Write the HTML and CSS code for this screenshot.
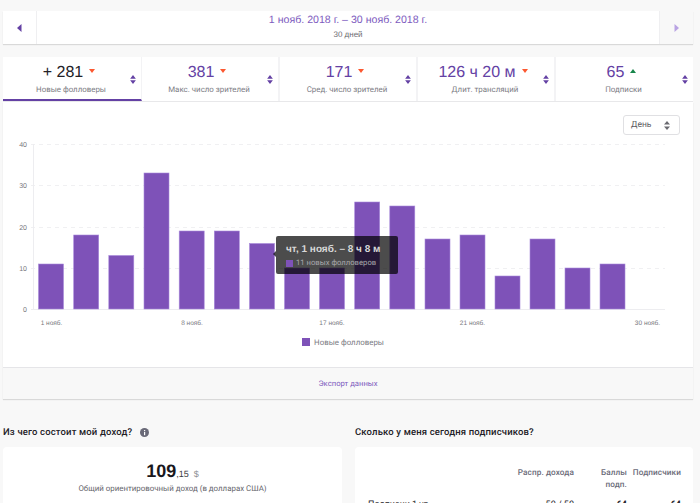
FILE: index.html
```html
<!DOCTYPE html>
<html lang="ru">
<head>
<meta charset="utf-8">
<title>Аналитика</title>
<link rel="stylesheet" href="styles.css">
</head>
<body>
<div class="page">
  <section class="datebar">
    <button class="nav"><svg width="5" height="8" viewBox="0 0 5 8"><path d="M4.500 0v8L0 4z" fill="#6441a4"/></svg></button>
    <div class="range">
      <div class="range-title">1 нояб. 2018 г. – 30 нояб. 2018 г.</div>
      <div class="range-sub">30 дней</div>
    </div>
    <button class="nav nav-next"><svg width="5" height="8" viewBox="0 0 5 8"><path d="M.5 0v8L5 4z" fill="#b9a3e3"/></svg></button>
  </section>

  <section class="tabs">
    <div class="tab tab-active">
      <div class="tab-value"><span class="num num-dark">+ 281</span><i class="tri tri-down"></i></div>
      <div class="tab-label">Новые фолловеры</div>
      <svg class="sort" width="6" height="9" viewBox="0 0 7 11"><path d="M3.500 0 7 4.500H0zM3.500 11 0 6.500h7z" fill="#6441a4"/></svg>
    </div>
    <div class="tab">
      <div class="tab-value"><span class="num">381</span><i class="tri tri-down"></i></div>
      <div class="tab-label">Макс. число зрителей</div>
      <svg class="sort" width="6" height="9" viewBox="0 0 7 11"><path d="M3.500 0 7 4.500H0zM3.500 11 0 6.500h7z" fill="#6441a4"/></svg>
    </div>
    <div class="tab">
      <div class="tab-value"><span class="num">171</span><i class="tri tri-down"></i></div>
      <div class="tab-label">Сред. число зрителей</div>
      <svg class="sort" width="6" height="9" viewBox="0 0 7 11"><path d="M3.500 0 7 4.500H0zM3.500 11 0 6.500h7z" fill="#6441a4"/></svg>
    </div>
    <div class="tab">
      <div class="tab-value"><span class="num">126 ч 20 м</span><i class="tri tri-down"></i></div>
      <div class="tab-label">Длит. трансляций</div>
      <svg class="sort" width="6" height="9" viewBox="0 0 7 11"><path d="M3.500 0 7 4.500H0zM3.500 11 0 6.500h7z" fill="#6441a4"/></svg>
    </div>
    <div class="tab">
      <div class="tab-value"><span class="num">65</span><i class="tri tri-up"></i></div>
      <div class="tab-label">Подписки</div>
      <svg class="sort" width="6" height="9" viewBox="0 0 7 11"><path d="M3.500 0 7 4.500H0zM3.500 11 0 6.500h7z" fill="#6441a4"/></svg>
    </div>
  </section>

  <section class="panel">
    <div class="chart-head">
      <div class="select"><span>День</span><svg width="6" height="9" viewBox="0 0 6 9"><path d="M3 0l3 3.500H0zM3 9 0 5.500h6z" fill="#6a6a70"/></svg></div>
    </div>
    <div class="chart">
      <svg class="plot" width="690" height="194" viewBox="0 134 690 194">
        <g class="grid">
          <line x1="28" x2="662" y1="144.500" y2="144.500"/>
          <line x1="28" x2="662" y1="185.500" y2="185.500"/>
          <line x1="28" x2="662" y1="227.500" y2="227.500"/>
          <line x1="28" x2="662" y1="268.500" y2="268.500"/>
        </g>
        <line class="axis" x1="28" x2="662" y1="309.500" y2="309.500"/>
        <line class="axis" x1="30.500" x2="30.500" y1="144" y2="309"/>
        <g class="ticks">
          <text x="24" y="147">40</text>
          <text x="24" y="188">30</text>
          <text x="24" y="230">20</text>
          <text x="24" y="271">10</text>
          <text x="24" y="312">0</text>
        </g>
        <g class="bars">
          <rect x="35.500" y="264" width="25" height="45"/>
          <rect x="70.700" y="235" width="25" height="74"/>
          <rect x="105.800" y="255.500" width="25" height="53.500"/>
          <rect x="141" y="173" width="25" height="136"/>
          <rect x="176.200" y="231" width="25" height="78"/>
          <rect x="211.300" y="231" width="25" height="78"/>
          <rect x="246.500" y="243.500" width="25" height="65.500"/>
          <rect x="281.500" y="268" width="25" height="41"/>
          <rect x="316.500" y="268" width="25" height="41"/>
          <rect x="351.700" y="202" width="25" height="107"/>
          <rect x="386.800" y="206" width="25" height="103"/>
          <rect x="422" y="239" width="25" height="70"/>
          <rect x="457" y="235" width="25" height="74"/>
          <rect x="492" y="276" width="25" height="33"/>
          <rect x="527" y="239" width="25" height="70"/>
          <rect x="562" y="268" width="25" height="41"/>
          <rect x="597" y="264" width="25" height="45"/>
        </g>
        <g class="dates">
          <text x="48.500" y="325">1 нояб.</text>
          <text x="189" y="325">8 нояб.</text>
          <text x="329" y="325">17 нояб.</text>
          <text x="469.500" y="325">21 нояб.</text>
          <text x="644.500" y="325">30 нояб.</text>
        </g>
      </svg>
      <div class="tooltip">
        <div class="tooltip-title">чт, 1 нояб. – 8 ч 8 м</div>
        <div class="tooltip-row"><i class="swatch swatch-sm"></i>11 новых фолловеров</div>
      </div>
    </div>
    <div class="legend"><i class="swatch"></i>Новые фолловеры</div>
    <div class="export">Экспорт данных</div>
  </section>

  <section class="columns">
    <div class="col">
      <h2 class="heading">Из чего состоит мой доход?<svg class="info" width="9" height="9" viewBox="0 0 9 9"><circle cx="4.500" cy="4.500" r="4.500" fill="#6a6a78"/><rect x="4" y="4" width="1.200" height="3.200" fill="#fff"/><rect x="4" y="2" width="1.200" height="1.200" fill="#fff"/></svg></h2>
      <div class="card income">
        <div class="total"><b>109</b><span class="cents">,15</span><span class="cur">$</span></div>
        <div class="total-label">Общий ориентировочный доход (в долларах США)</div>
      </div>
    </div>
    <div class="col col-right">
      <h2 class="heading">Сколько у меня сегодня подписчиков?</h2>
      <div class="card subs">
        <div class="row row-head">
          <span class="c-name"></span>
          <span class="c-split">Распр. дохода</span>
          <span class="c-points">Баллы<br>подп.</span>
          <span class="c-subs">Подписчики</span>
        </div>
        <div class="row row-body">
          <span class="c-name">Подписки 1 ур.</span>
          <span class="c-split">50 / 50</span>
          <span class="c-points"><b>64</b></span>
          <span class="c-subs"><b>64</b></span>
        </div>
      </div>
    </div>
  </section>
</div>
</body>
</html>
```

FILE: styles.css
```css
* { box-sizing: border-box; }
html, body { margin: 0; height: 503px; overflow: hidden; background: #f8f8f8; }
body { font-family: "Liberation Sans", Arial, sans-serif; color: #6a6a70; text-rendering: geometricPrecision; }
.page { width: 690px; margin-left: 3px; padding-top: 11px; }

.datebar { display: flex; height: 33px; background: #fff; box-shadow: 0 1px 1px rgba(0,0,0,.12); }
.nav { width: 34px; padding: 0; border: 0; background: #fff; display: flex; align-items: center; justify-content: center; border-right: 1px solid #efeff1; }
.nav-next { background: #f8f8f8; border-right: 0; border-left: 1px solid #efeff1; }
.range { flex: 1; text-align: center; }
.range-title { color: #7d5bbe; font-size: 10.600px; line-height: 14px; margin-top: 2px; }
.range-sub { color: #6a6a70; font-size: 8px; line-height: 10px; margin-top: 3px; }

.tabs { display: grid; grid-template-columns: 139px repeat(3, 138px) 137px; margin-top: 13px; height: 45px; background: #fff; border-bottom: 1px solid #e8e8ea; }
.tab { position: relative; text-align: center; border-right: 2px solid #f3f3f5; height: 44px; padding-top: 6px; }
.tab:last-child { border-right: 0; }
.tab-active { border-right: 1px solid #f3f3f5; border-bottom: 2px solid #6441a4; }
.tab-value { display: flex; justify-content: center; align-items: flex-start; gap: 6px; height: 20px; padding-right: 6px; }
.num { font-size: 16px; line-height: 20px; color: #6441a4; }
.num-dark { color: #232127; }
.tri { width: 0; height: 0; margin-top: 6px; border-left: 3.500px solid transparent; border-right: 3.500px solid transparent; }
.tri-down { border-top: 4px solid #fc5830; }
.tri-up { border-bottom: 4px solid #18864b; }
.tab-label { font-family: Roboto, sans-serif; font-size: 7.900px; line-height: 11px; margin-top: 1px; padding-right: 2px; color: #7c7c84; }
.sort { position: absolute; right: 5px; top: 18px; }

.panel { background: #fff; box-shadow: 0 1px 1px rgba(0,0,0,.12); }
.chart-head { display: flex; justify-content: flex-end; padding: 13px 13px 0; height: 32px; }
.select { flex: none; width: 57px; height: 20px; border: 1px solid #e0e0e3; border-radius: 3px; display: flex; align-items: center; justify-content: space-between; padding: 0 9px 0 7px; font-family: Roboto, sans-serif; font-size: 8.500px; color: #5a5a60; }
.chart { position: relative; height: 194px; }
.plot { display: block; }
.grid line { stroke: #f0f0f2; stroke-width: 1; stroke-dasharray: 4 4; }
.axis { stroke: #ededf0; stroke-width: 1; }
.ticks text { font: 7px "Liberation Sans", sans-serif; fill: #77777d; text-anchor: end; }
.dates text { font: 6.500px "Liberation Sans", sans-serif; fill: #77777d; text-anchor: middle; }
.bars rect { fill: #7e52b8; stroke: #a98adb; stroke-width: .6; }
.tooltip { position: absolute; left: 273px; top: 102px; width: 122px; height: 38px; padding: 8px 10px; background: rgba(0,0,0,.7); border-radius: 2px; }
.tooltip::before { content: ""; position: absolute; left: -3px; top: 15px; border: 3px solid transparent; border-left: 0; border-right-color: rgba(0,0,0,.7); }
.tooltip-title { font-size: 10px; line-height: 12px; font-weight: 700; color: #d8d8d8; white-space: nowrap; }
.tooltip-row { display: flex; align-items: center; gap: 3px; font-family: Roboto, sans-serif; font-size: 7.700px; line-height: 12px; color: #a8a8ac; margin-top: 1px; white-space: nowrap; }
.legend { display: flex; align-items: center; justify-content: center; gap: 4px; height: 39px; padding-bottom: 11px; padding-right: 10px; font-family: Roboto, sans-serif; font-size: 7.900px; color: #7c7c84; }
.swatch { display: block; width: 8px; height: 8px; background: #7e52b8; }
.swatch-sm { width: 7px; height: 7px; }
.export { height: 32px; line-height: 32px; text-align: center; font-family: Roboto, sans-serif; font-size: 7.700px; color: #7d5bbe; background: #f8f8f8; border-top: 1px solid #e5e5e8; }

.columns { display: flex; gap: 13px; margin-top: 27px; }
.col { width: 339px; }
.col-right { width: 338px; }
.heading { display: flex; align-items: center; height: 12px; margin: 0 0 9px; font-family: Roboto, sans-serif; font-size: 9.500px; font-weight: 500; letter-spacing: .15px; color: #232127; }
.info { margin-left: 8px; }
.card { background: #fff; border-radius: 4px; height: 60px; }
.income { text-align: center; padding-top: 13px; }
.total { display: flex; justify-content: center; align-items: baseline; color: #19171c; height: 22px; line-height: 22px; }
.total b { font-size: 18px; }
.cents { font-size: 9px; font-weight: 400; color: #3a3a40; }
.cur { font-size: 9px; margin-left: 5px; color: #8a8a90; }
.total-label { font-family: Roboto, sans-serif; font-size: 7.900px; line-height: 11px; margin-top: 1px; color: #66666c; }
.subs { padding: 0 12px 0 13px; }
.row { display: flex; font-family: Roboto, sans-serif; font-size: 9px; }
.row-head { padding-top: 20px; height: 49px; font-size: 8.200px; font-weight: 500; line-height: 12px; letter-spacing: .1px; color: #6a6a78; }
.row-body { color: #232127; line-height: 12px; margin-top: 3px; }
.c-name { flex: 1; }
.c-split { width: 80px; text-align: right; }
.c-points { width: 53px; text-align: right; }
.c-subs { width: 54px; text-align: right; }
```
